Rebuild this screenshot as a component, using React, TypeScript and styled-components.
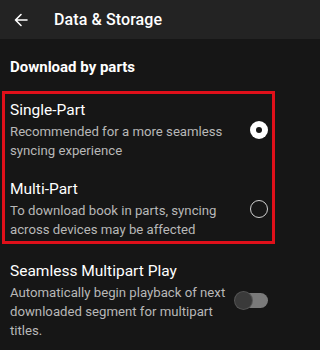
import styled, { createGlobalStyle } from 'styled-components';

const GlobalStyle = createGlobalStyle`
  html, body {
    margin: 0;
    padding: 0;
    background: #161616;
    overflow: hidden;
  }
  body {
    font-family: Roboto, "Liberation Sans", sans-serif;
    -webkit-font-smoothing: antialiased;
  }
`;

const Screen = styled.div`
  width: 100%;
  height: 100vh;
  background: #161616;
  color: #fff;
  overflow: hidden;
`;

const Header = styled.header`
  height: 39px;
  background: #232323;
  display: flex;
  align-items: center;
  padding-left: 14px;
  gap: 26px;
`;

const BackIcon = styled.svg`
  width: 14px;
  height: 14px;
  flex-shrink: 0;
`;

const HeaderTitle = styled.h1`
  margin: 0;
  font-size: 16px;
  font-weight: 500;
  letter-spacing: 0.1px;
`;

const SectionTitle = styled.h2`
  margin: 0;
  padding: 18px 10px 14px;
  font-size: 15px;
  font-weight: 700;
  line-height: 20px;
`;

const Highlight = styled.div`
  width: 273px;
  box-sizing: border-box;
  margin-left: 2px;
  border: 3px solid #e0101a;
  padding: 6px 0 2px;
`;

const Option = styled.div<{ $gap?: number }>`
  display: flex;
  align-items: center;
  padding: 0 4px 0 5px;
  margin-top: ${({ $gap }) => $gap ?? 0}px;
`;

const OptionText = styled.div`
  flex: 1;
  min-width: 0;
`;

const OptionTitle = styled.div`
  font-size: 15.5px;
  line-height: 20px;
  margin-bottom: 2px;
  color: #fff;
`;

const OptionDesc = styled.div`
  font-size: 13.2px;
  line-height: 19px;
  color: #b8b8b8;
  padding-right: 8px;
`;

const Radio = styled.span<{ $checked?: boolean }>`
  width: 18px;
  height: 18px;
  border-radius: 50%;
  box-sizing: border-box;
  flex-shrink: 0;
  display: flex;
  align-items: center;
  justify-content: center;
  ${({ $checked }) =>
    $checked
      ? `background: #fff;`
      : `border: 1.5px solid #cfcfcf;`}

  &::after {
    content: '';
    width: 6px;
    height: 6px;
    border-radius: 50%;
    background: #161616;
    display: ${({ $checked }) => ($checked ? 'block' : 'none')};
  }
`;

const SettingRow = styled.div`
  width: 282px;
  box-sizing: border-box;
  display: flex;
  align-items: center;
  padding: 17px 14px 0 10px;
`;

const Toggle = styled.span`
  position: relative;
  width: 33px;
  height: 15px;
  border-radius: 8px;
  background: #7a7a7a;
  flex-shrink: 0;

  &::before {
    content: '';
    position: absolute;
    left: 0;
    top: -1px;
    width: 17px;
    height: 17px;
    border-radius: 50%;
    background: #3a3a3a;
    box-shadow: 0 0 0 1px #555;
  }
`;

const App = () => (
  <>
    <GlobalStyle />
    <Screen>
      <Header>
        <BackIcon viewBox="0 0 14 14" fill="none" stroke="#fff" strokeWidth="1.6" strokeLinecap="round" strokeLinejoin="round">
          <path d="M13 7H1.5M7 1.5L1.5 7L7 12.5" />
        </BackIcon>
        <HeaderTitle>Data &amp; Storage</HeaderTitle>
      </Header>
      <SectionTitle>Download by parts</SectionTitle>
      <Highlight>
        <Option>
          <OptionText>
            <OptionTitle>Single-Part</OptionTitle>
            <OptionDesc>Recommended for a more seamless syncing experience</OptionDesc>
          </OptionText>
          <Radio $checked />
        </Option>
        <Option $gap={19}>
          <OptionText>
            <OptionTitle>Multi-Part</OptionTitle>
            <OptionDesc>To download book in parts, syncing across devices may be affected</OptionDesc>
          </OptionText>
          <Radio />
        </Option>
      </Highlight>
      <SettingRow>
        <OptionText>
          <OptionTitle>Seamless Multipart Play</OptionTitle>
          <OptionDesc>Automatically begin playback of next downloaded segment for multipart titles.</OptionDesc>
        </OptionText>
        <Toggle />
      </SettingRow>
    </Screen>
  </>
);

export default App;
